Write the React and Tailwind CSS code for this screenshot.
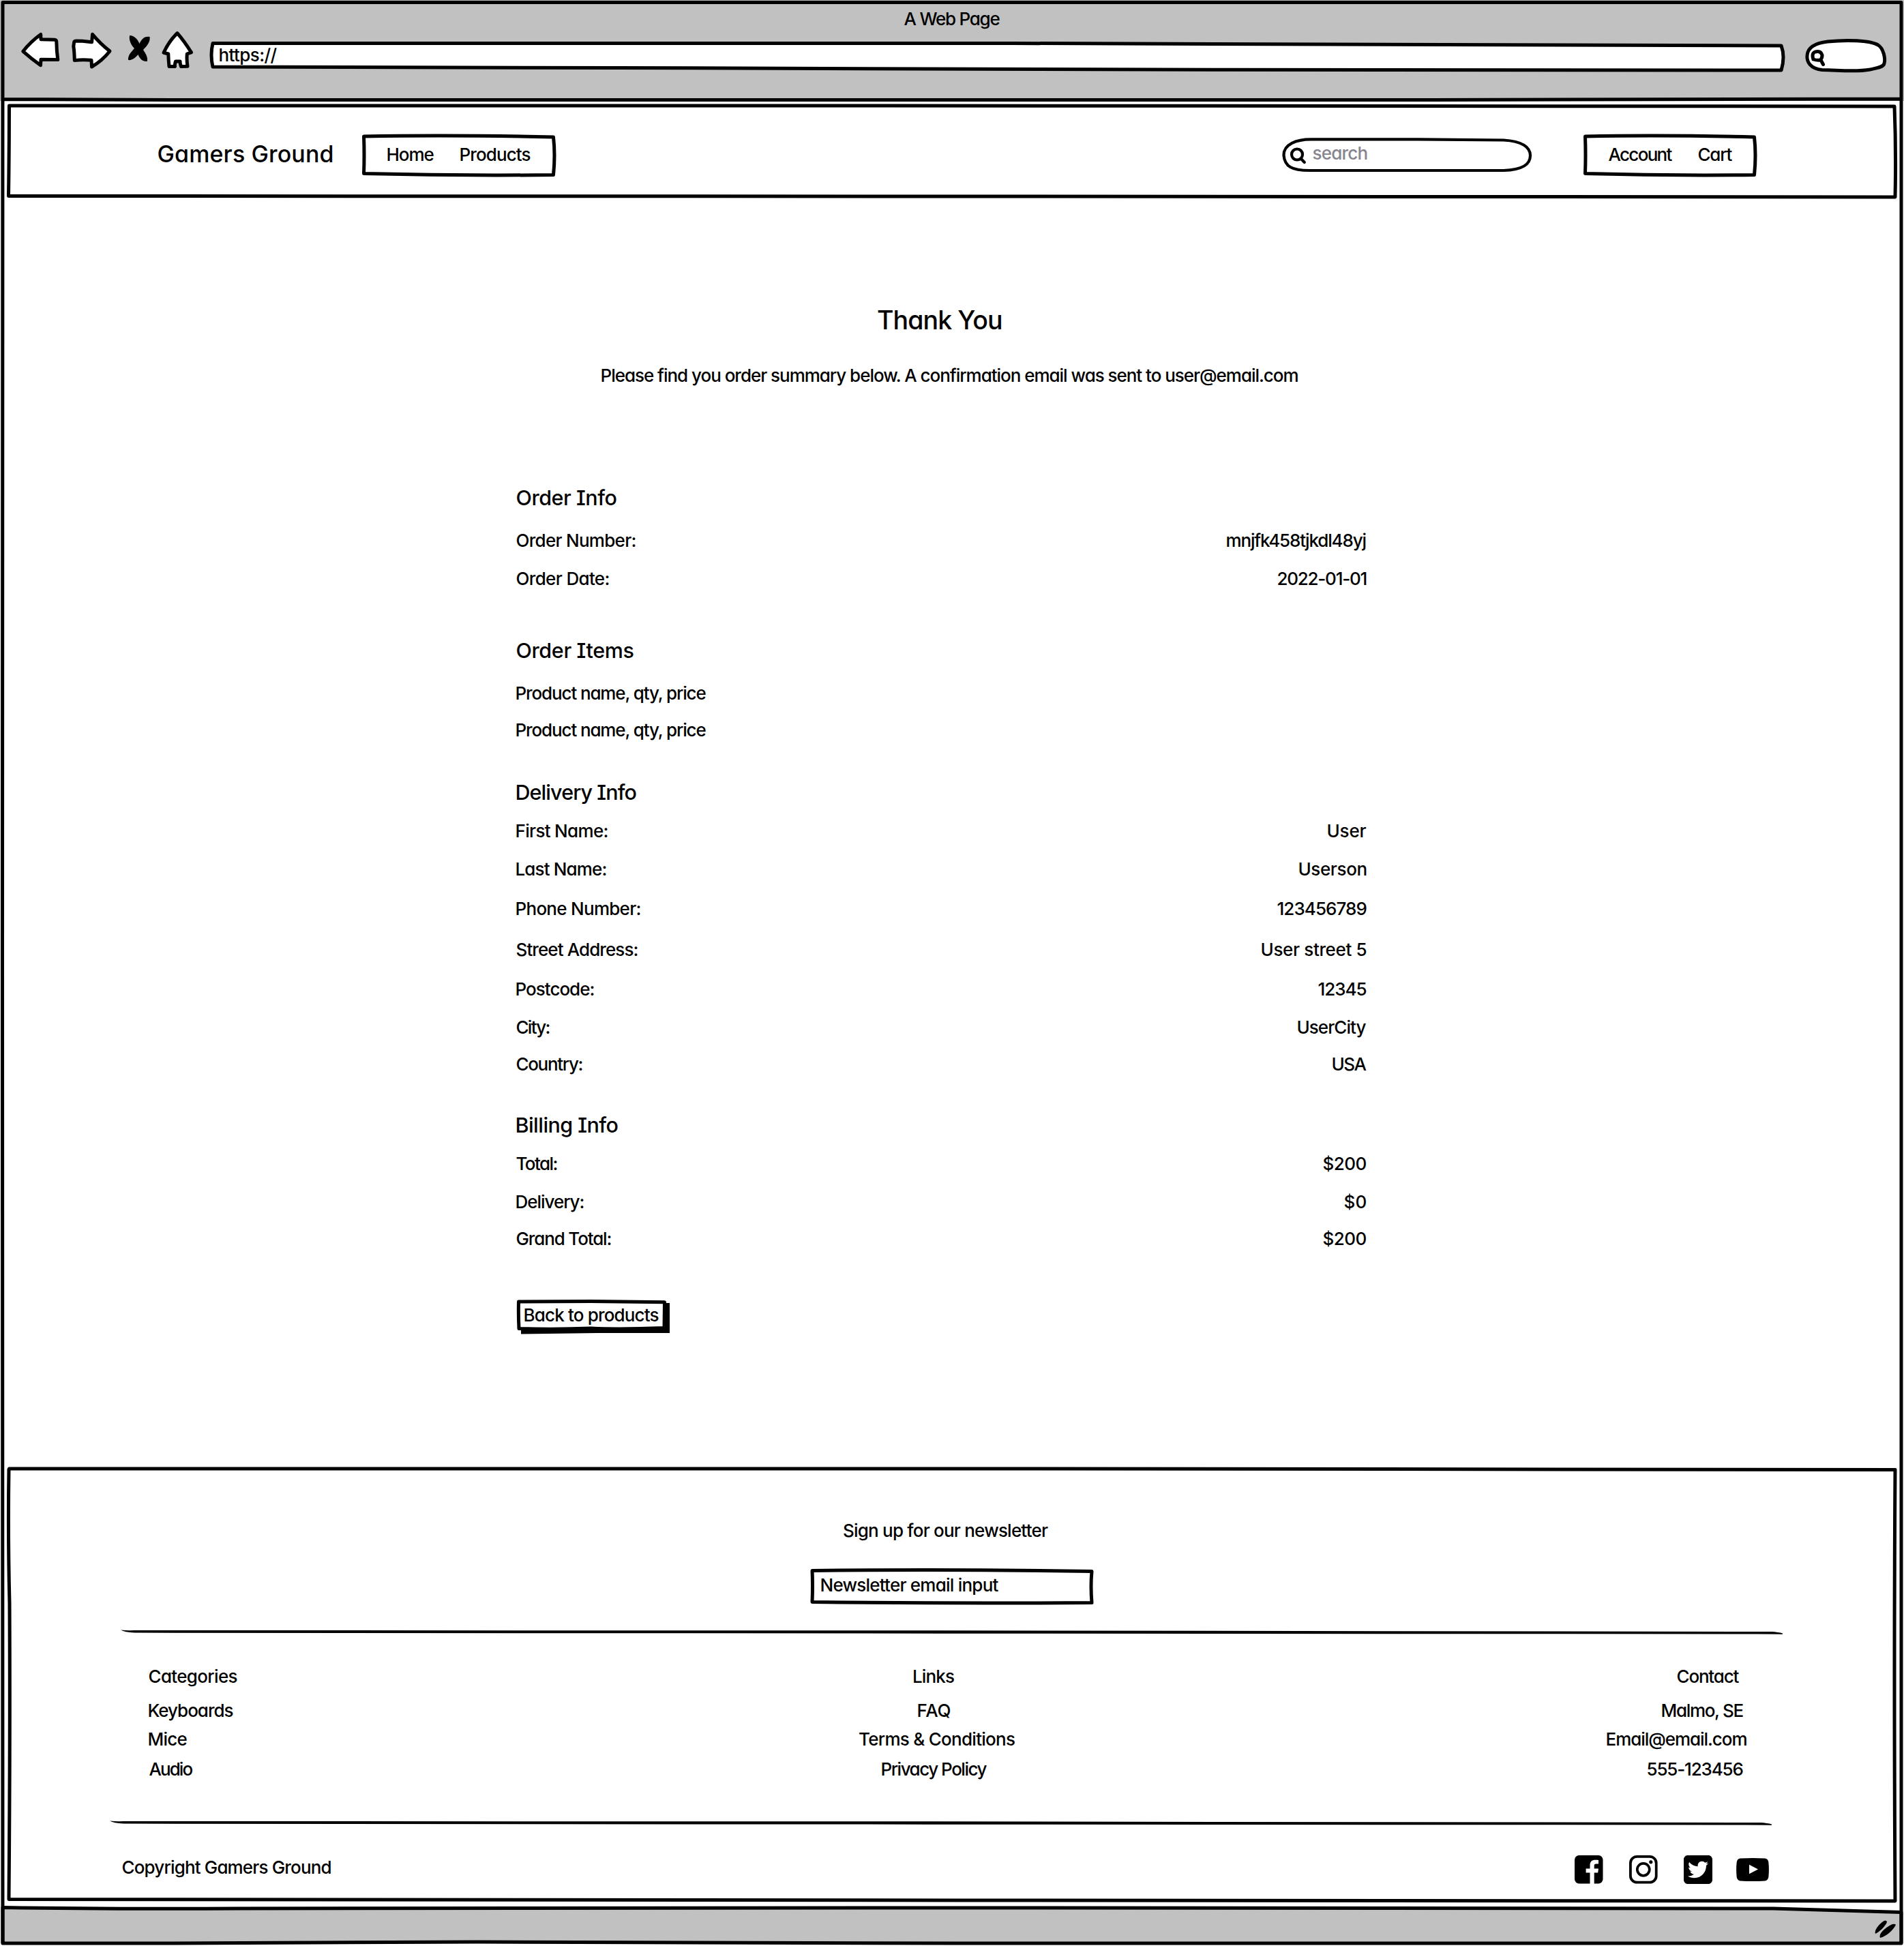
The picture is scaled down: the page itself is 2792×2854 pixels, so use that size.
import React, { useLayoutEffect, useRef, useState } from "react";
import { FaSquareTwitter } from "react-icons/fa6";

const SIZES = {
  body: "text-[26px] leading-8 font-medium translate-y-px",
  section: "text-[30.5px] leading-10 font-medium",
  brand: "text-[34px] leading-10 font-medium",
  title: "text-[37.5px] leading-[48px] font-medium translate-y-px",
};

/* A line of text whose letters are spread so that the ink spans `w` pixels. */
function Line({ w, size = "body", className = "", as: Tag = "span", children }) {
  const ref = useRef(null);
  const [fit, setFit] = useState({ letterSpacing: 0, marginLeft: 0 });
  useLayoutEffect(() => {
    const el = ref.current;
    const cs = getComputedStyle(el);
    const ctx = document.createElement("canvas").getContext("2d");
    ctx.font = `${cs.fontWeight} ${cs.fontSize} ${cs.fontFamily}`;
    const m = ctx.measureText(children);
    const left = -m.actualBoundingBoxLeft;
    const right = m.width - m.actualBoundingBoxRight;
    const ink = el.getBoundingClientRect().width - left - right;
    setFit({ letterSpacing: (w - ink) / (children.length - 1), marginLeft: 0.5 - left });
  }, []);
  return (
    <Tag className={`block shrink-0 whitespace-nowrap ${SIZES[size]} ${className}`} style={{ width: w }}>
      <span ref={ref} className="inline-block" style={fit}>
        {children}
      </span>
    </Tag>
  );
}

/* Hand-drawn outline that sits behind a box's content. */
function Sketch({ w, h, children }) {
  return (
    <svg
      className="pointer-events-none absolute left-0 top-0 overflow-visible"
      width={w}
      height={h}
      viewBox={`0 0 ${w} ${h}`}
      fill="none"
      stroke="#000"
      strokeWidth="5"
      strokeLinejoin="round"
      strokeLinecap="round"
      aria-hidden="true"
    >
      {children}
    </svg>
  );
}

function ToolIcon({ x, w, className = "", children }) {
  return (
    <svg
      className={`shrink-0 ${className}`}
      width={w}
      height="67"
      viewBox={`${x} 43 ${w} 67`}
      fill="#fff"
      stroke="#000"
      strokeWidth="5"
      strokeLinejoin="round"
      strokeLinecap="round"
      aria-hidden="true"
    >
      {children}
    </svg>
  );
}

function BrowserBar() {
  return (
    <header className="relative h-[148px] shrink-0 bg-[#c1c1c1]">
      <div className="flex h-[43px] justify-center pr-px pt-[11px]">
        <Line w={141}>A Web Page</Line>
      </div>
      <div className="flex h-[67px] pl-7">
        <ToolIcon x={28} w={64}>
          <path d="M33.8 75.3 Q45 61 59.7 50.5 L60 57.7 L80 58.2 Q82.6 58.4 82.8 61 Q83 75 84.8 87.6 L60 87.2 L59.5 95.8 Q46 86 33.8 75.3Z" />
        </ToolIcon>
        <ToolIcon x={100} w={68} className="ml-2">
          <path d="M108.6 62 Q109 60 112 60 L121 60.3 L134.6 61.8 L135.6 50.3 Q147 64 161 75 Q150 89 134.5 98 L134 88.2 Q120 87 109.3 88.6 Q109 75 107.8 68Z" />
        </ToolIcon>
        <ToolIcon x={184} w={40} className="ml-4">
          <path
            fill="#000"
            stroke="none"
            d="M190.2 52 C197 52 202 58 204.5 64 C208 56 213 53 219.5 54 C221 61 215 68 210 73 C213 78 217 83 216 90 C208 91 204 84 202.5 80 C199 84 194 89 188 88 C187.500 80 193 76 197 71 C192.500 66 188.500 59 190.200 52Z"
          />
        </ToolIcon>
        <ToolIcon x={234} w={52} className="ml-[10px]">
          <path d="M260 48.6 Q270 60 280.5 76.8 L274.3 79 Q273.5 88 275 97.3 L265.5 97.5 Q264 94 264 90 L257.5 90 Q256 94 256.5 97.5 L248 97.6 Q247 88 246.8 79 L240 77.3 Q248 60 260 48.6Z" />
        </ToolIcon>
        <div className="relative ml-[18px] w-[2318px] shrink-0">
          <Sketch w={2318} h={67}>
            <path fill="#fff" d="M8 20.5 L1180 20.5 L2308 24 Q2314 40 2308 60 L1500 59.3 L600 56.5 L8 55 Q4 38 8 20.5Z" />
          </Sketch>
          <div className="relative pl-[17px] pt-[21px]">
            <Line w={85}>https://</Line>
          </div>
        </div>
        <ToolIcon x={2642} w={128} className="ml-5">
          <path d="M2672 102.5 C2655 101 2649 91 2650 81 C2651 68 2664 63 2680 61 C2708 58 2742 59 2754 66 C2762 71 2765 86 2763 93 C2762 99 2750 100 2742 102 C2722 106 2698 103 2672 102.5Z" />
          <path fill="none" d="M2659 87 Q2656 78 2662 76 Q2670 74 2672 81 Q2672 86 2669 88 Q2665 89 2659 87 M2670 88 L2673.5 94.5" />
        </ToolIcon>
      </div>
    </header>
  );
}

function LinkBox({ w, className, children }) {
  return (
    <nav className={`relative flex h-[62px] shrink-0 items-start pt-[13px] ${className}`}>
      <Sketch w={w} h={62}>
        <path d={`M2.5 3 Q${w * 0.45} 0.5 ${w - 3.5} 4 Q${w - 0.5} 30 ${w - 3.5} 59.5 Q${w * 0.5} 61 2.5 57.5 Q3.5 30 2.5 3Z`} />
      </Sketch>
      {children}
    </nav>
  );
}

function SiteHeader() {
  return (
    <header className="relative mx-[10px] mt-1 flex h-[139px] shrink-0 pt-[45px]">
      <Sketch w={2772} h={139}>
        <path d="M3.5 3 L1300 3 L2768 4 Q2770.5 70 2769 137 L1500 136 L2.5 135.5 Q3.5 70 3.5 3Z" />
      </Sketch>
      <Line w={256} size="brand" className="ml-[221px] mt-[9px]">
        Gamers Ground
      </Line>
      <LinkBox w={284} className="ml-11 w-[284px] pl-[37px]">
        <Line w={68}>Home</Line>
        <Line w={102} className="ml-[39px]">
          Products
        </Line>
      </LinkBox>
      <div className="relative ml-[1065px] mt-[5px] h-[50px] w-[366px] shrink-0 pl-[45px] pt-[6px]">
        <Sketch w={366} h={50}>
          <path
            strokeWidth="4.2"
            d="M44 2.300 L200 2.300 L325 3.5 C352 5 364 14 364 26 C364 40 352 47 325 48 L40 48 C14 48 4 42 2.5 26 C2 10 20 2 44 2.3Z"
          />
          <circle cx="22" cy="24.5" r="8" strokeWidth="4.2" />
          <path strokeWidth="4.2" d="M28 31 L32.8 36" />
        </Sketch>
        <Line w={79} className="text-[#85848f]">
          search
        </Line>
      </div>
      <LinkBox w={254} className="ml-[76px] w-[254px] pl-9">
        <Line w={94}>Account</Line>
        <Line w={50} className="ml-[38px]">
          Cart
        </Line>
      </LinkBox>
    </header>
  );
}

const SECTIONS = [
  {
    title: ["Order Info", 146, "mt-36"],
    rows: [
      ["mt-[26px]", "Order Number:", 174, "mnjfk458tjkdl48yj", 205],
      ["mt-6", "Order Date:", 135, "2022-01-01", 130],
    ],
  },
  {
    title: ["Order Items", 172, "mt-[70px]"],
    rows: [
      ["mt-[26px]", "Product name, qty, price", 278],
      ["mt-[22px]", "Product name, qty, price", 278],
    ],
  },
  {
    title: ["Delivery Info", 175, "mt-14"],
    rows: [
      ["mt-5", "First Name:", 133, "User", 56],
      ["mt-6", "Last Name:", 131, "Userson", 98],
      ["mt-[26px]", "Phone Number:", 181, "123456789", 130],
      ["mt-7", "Street Address:", 177, "User street 5", 153],
      ["mt-[26px]", "Postcode:", 113, "12345", 70],
      ["mt-6", "City:", 48, "UserCity", 100],
      ["mt-[22px]", "Country:", 96, "USA", 49],
    ],
  },
  {
    title: ["Billing Info", 148, "mt-[54px]"],
    rows: [
      ["mt-5", "Total:", 59, "$200", 63],
      ["mt-6", "Delivery:", 98, "$0", 32],
      ["mt-[22px]", "Grand Total:", 138, "$200", 63],
    ],
  },
];

function Summary() {
  return (
    <main className="flex h-[1860px] shrink-0 flex-col">
      <div className="mt-[154px] flex justify-center pr-[38px]">
        <Line as="h1" size="title" w={181}>
          Thank You
        </Line>
      </div>
      <div className="mt-[41px] flex justify-center pr-[7px]">
        <Line as="p" w={1021}>
          Please find you order summary below. A confirmation email was sent to user@email.com
        </Line>
      </div>
      <div className="ml-[757px] w-[1246px]">
        {SECTIONS.map(({ title: [name, w, gap], rows }) => (
          <section key={name} className="flex flex-col">
            <Line as="h2" size="section" w={w} className={gap}>
              {name}
            </Line>
            {rows.map(([rowGap, label, lw, value, vw], i) => (
              <div key={i} className={`flex justify-between ${rowGap}`}>
                <Line w={lw}>{label}</Line>
                {value && <Line w={vw}>{value}</Line>}
              </div>
            ))}
          </section>
        ))}
        <button className="relative mt-[73px] flex h-[52px] w-[226px] items-start pl-3 pt-[7px] text-left">
          <Sketch w={226} h={52}>
            <path fill="#000" stroke="none" d="M7 44 L217 42 L217 6 L225 6 L225 50 L120 50 L7 51.5Z" />
            <path fill="#fff" d="M3.5 4 L110 3.5 L217.5 4.8 L217 42.5 Q150 45 110 43 Q60 45 4 43.5 Q3 24 3.5 4Z" />
          </Sketch>
          <Line w={196} className="relative">
            Back to products
          </Line>
        </button>
      </div>
    </main>
  );
}

function Rule({ className }) {
  return (
    <svg className={`block shrink-0 ${className}`} width="2437" height="11" viewBox="0 0 2437 11" aria-hidden="true">
      <path d="M0 2.5 Q10 3.5 20 3 L1200 3.3 L2420 5 Q2431 5.5 2437 7.5 L2437 8.8 L2400 8.5 L1200 7.7 L20 6.6 Q6 6 0 2.5Z" />
    </svg>
  );
}

function FooterLinks() {
  const gaps = ["", "mt-[18px]", "mt-[10px]", "mt-3"];
  const left = [["Categories", 129], ["Keyboards", 123], ["Mice", 56], ["Audio", 64]];
  const middle = [["Links", 59, "pr-[9px]"], ["FAQ", 47, "pr-2"], ["Terms & Conditions", 228, ""], ["Privacy Policy", 154, "pr-[7px]"]];
  const right = [["Contact", 91, "pr-[11px]"], ["Malmo, SE", 119, "pr-[5px]"], ["Email@email.com", 205, ""], ["555-123456", 140, "pr-[6px]"]];
  return (
    <div className="ml-[208px] mt-[43px] flex w-[2343px] justify-between">
      <ul className="w-[129px]">
        {left.map(([t, w], i) => (
          <li key={t} className={gaps[i]}>
            <Line w={w}>{t}</Line>
          </li>
        ))}
      </ul>
      <ul className="ml-[44px] w-[228px]">
        {middle.map(([t, w, pad], i) => (
          <li key={t} className={`flex justify-center ${gaps[i]} ${pad}`}>
            <Line w={w}>{t}</Line>
          </li>
        ))}
      </ul>
      <ul className="w-[205px]">
        {right.map(([t, w, pad], i) => (
          <li key={t} className={`flex justify-end ${gaps[i]} ${pad}`}>
            <Line w={w}>{t}</Line>
          </li>
        ))}
      </ul>
    </div>
  );
}

function Socials() {
  return (
    <div className="ml-[1824px] flex h-[42px] items-center">
      <svg className="h-[42px] w-[42px]" viewBox="0 0 42 42" aria-label="Facebook">
        <rect width="41.5" height="41.5" rx="6.5" />
        <path
          fill="#fff"
          d="M22.5 42 V25.5 H16.6 V19.4 H22.5 V14.5 C22.5 9.2 25.5 6.8 30.3 6.8 C32.5 6.8 34.2 6.9 35 7.1 V12.4 H31.6 C29.4 12.4 28.7 13.5 28.7 15.5 V19.4 H35 L34.2 25.5 H28.7 V42Z"
        />
      </svg>
      <svg className="ml-[38px] h-[42px] w-[42px]" viewBox="0 0 42 42" fill="none" stroke="#000" aria-label="Instagram">
        <rect x="1.9" y="1.9" width="37.8" height="37.8" rx="9.5" strokeWidth="3.8" />
        <circle cx="20.8" cy="20.8" r="9" strokeWidth="3.7" />
        <circle cx="31.8" cy="9.8" r="2.6" fill="#000" stroke="none" />
      </svg>
      <FaSquareTwitter className="ml-[38px] h-12 w-[42px]" />
      <svg className="ml-[35px] h-[34px] w-12" viewBox="0 0 48 34" aria-label="YouTube">
        <path d="M6 0.6 Q24 -0.5 42 0.6 Q46.5 1 47.3 6 Q48.5 17 47.3 28 Q46.5 33 42 33.4 Q24 34.5 6 33.4 Q1.5 33 0.7 28 Q-0.5 17 0.7 6 Q1.5 1 6 0.6Z" />
        <path fill="#fff" d="M19 9.8 L32 16.5 L19 23.2Z" />
      </svg>
    </div>
  );
}

function SiteFooter() {
  return (
    <footer className="relative mx-[10px] h-[639px] shrink-0">
      <Sketch w={2772} h={639}>
        <path d="M3.5 3 L1500 3 L2769 4.5 Q2767 300 2769 637 L1400 636 L3 634.5 Q5 400 4 200 Q1.5 100 3 4Z" />
      </Sketch>
      <div className="flex justify-center pr-[19px] pt-[77px]">
        <Line w={300}>Sign up for our newsletter</Line>
      </div>
      <div className="relative ml-[1178px] mt-10 h-[53px] w-[416px] pl-[16px] pt-2">
        <Sketch w={416} h={53}>
          <path d="M3 3.5 Q200 1 413 4.5 Q411 26 413 50.5 Q210 52 3 49.5 Q4 26 3 3.5Z" />
        </Sketch>
        <Line w={260}>Newsletter email input</Line>
      </div>
      <Rule className="ml-[167px] mt-[35px]" />
      <FooterLinks />
      <Rule className="ml-[151px] mt-[58px]" />
      <div className="ml-[169px] mt-[42px] flex">
        <Line w={306} className="mt-px">
          Copyright Gamers Ground
        </Line>
        <Socials />
      </div>
    </footer>
  );
}

export default function App() {
  return (
    <div className="relative flex h-[2854px] w-[2792px] flex-col overflow-hidden bg-white font-['Inter','Lato',sans-serif] text-black [font-feature-settings:'cv11','cv08','calt'_0,'liga'_0]">
      <BrowserBar />
      <SiteHeader />
      <Summary />
      <SiteFooter />
      <div className="relative mt-[9px] h-[50px] shrink-0">
        <Sketch w={2792} h={50}>
          <path
            fill="#c1c1c1"
            d="M4 -1.5 Q150 1 350 0 L1400 -1 L2600 0 L2788 5.5 L2788 51 L1400 51 L700 49 L250 51 L4 51Z"
          />
          <path
            fill="#000"
            stroke="none"
            d="M2750 37 C2748 30 2759 20 2763 18 Q2767 17 2767 20 C2764 27 2755 35 2750 37Z M2757 43 C2754 35 2770 25 2775 23 Q2779 22 2780 24 C2776 32 2766 41 2757 43Z"
          />
        </Sketch>
      </div>
      <Sketch w={2792} h={2854}>
        <path d="M4 3.5 L2788 3.5 L2788 1400 L2788 2849 M4 3.5 L3.5 1400 L4 2849 M4 145.5 L250 146.5 L2100 146.5 L2788 145" />
      </Sketch>
    </div>
  );
}
